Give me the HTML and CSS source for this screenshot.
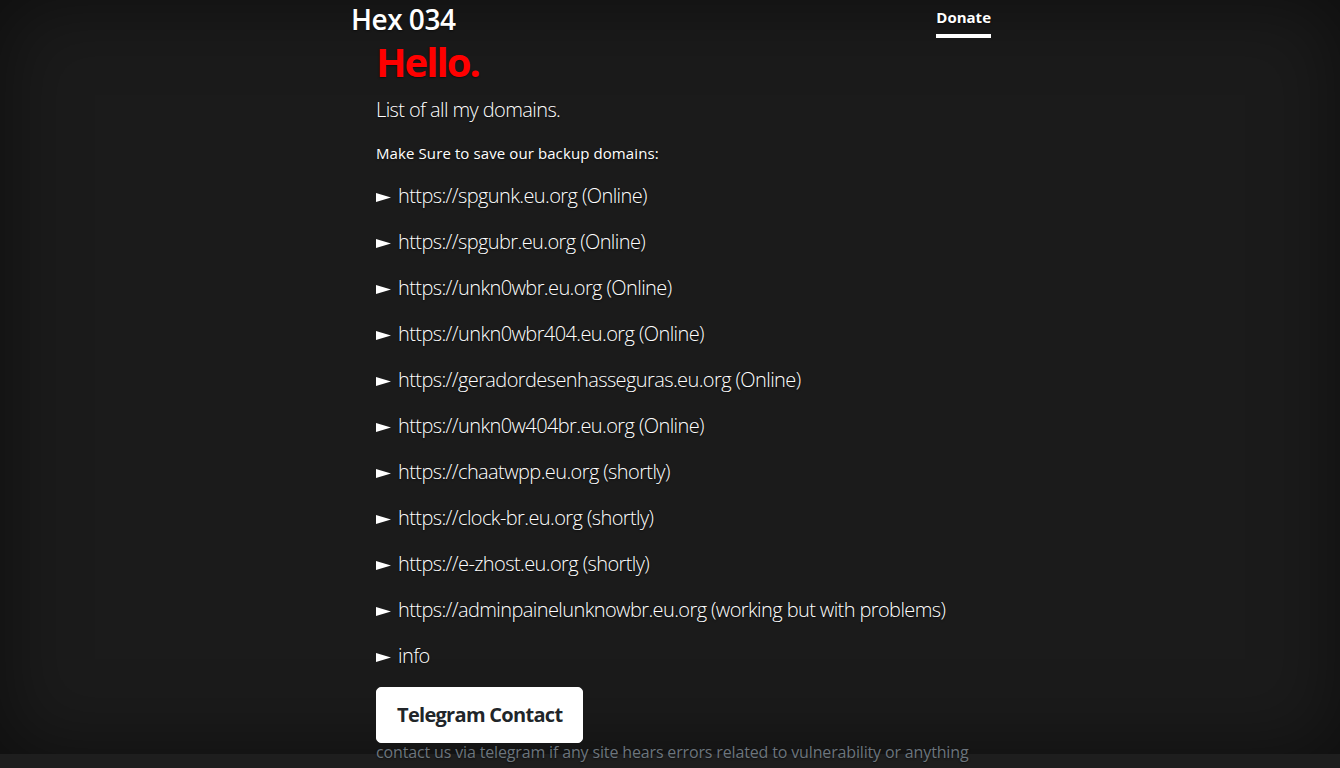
FILE: index.html
```html
<!DOCTYPE html>
<html lang="en">
<head>
<meta charset="utf-8">
<title>Hex 034</title>
<link rel="stylesheet" href="styles.css">
</head>
<body>
<div class="cover">
  <div class="container">
    <header class="masthead">
      <h3 class="brand">Hex 034</h3>
      <nav class="nav">
        <a class="nav-link active" href="#">Donate</a>
      </nav>
    </header>
    <main class="main">
      <h1 class="hello">Hello.</h1>
      <p class="lead">List of all my domains.</p>
      <p class="note">Make Sure to save our backup domains:</p>
      <p class="lead item"><svg class="arrow" width="15" height="9" viewBox="0 0 15 9"><polygon points="0,0 15,4.5 0,9"/></svg><a href="#">https://spgunk.eu.org</a> (Online)</p>
      <p class="lead item"><svg class="arrow" width="15" height="9" viewBox="0 0 15 9"><polygon points="0,0 15,4.5 0,9"/></svg><a href="#">https://spgubr.eu.org</a> (Online)</p>
      <p class="lead item"><svg class="arrow" width="15" height="9" viewBox="0 0 15 9"><polygon points="0,0 15,4.5 0,9"/></svg><a href="#">https://unkn0wbr.eu.org</a> (Online)</p>
      <p class="lead item"><svg class="arrow" width="15" height="9" viewBox="0 0 15 9"><polygon points="0,0 15,4.5 0,9"/></svg><a href="#">https://unkn0wbr404.eu.org</a> (Online)</p>
      <p class="lead item"><svg class="arrow" width="15" height="9" viewBox="0 0 15 9"><polygon points="0,0 15,4.5 0,9"/></svg><a href="#">https://geradordesenhasseguras.eu.org</a> (Online)</p>
      <p class="lead item"><svg class="arrow" width="15" height="9" viewBox="0 0 15 9"><polygon points="0,0 15,4.5 0,9"/></svg><a href="#">https://unkn0w404br.eu.org</a> (Online)</p>
      <p class="lead item"><svg class="arrow" width="15" height="9" viewBox="0 0 15 9"><polygon points="0,0 15,4.5 0,9"/></svg><a href="#">https://chaatwpp.eu.org</a> (shortly)</p>
      <p class="lead item"><svg class="arrow" width="15" height="9" viewBox="0 0 15 9"><polygon points="0,0 15,4.5 0,9"/></svg><a href="#">https://clock-br.eu.org</a> (shortly)</p>
      <p class="lead item"><svg class="arrow" width="15" height="9" viewBox="0 0 15 9"><polygon points="0,0 15,4.5 0,9"/></svg><a href="#">https://e-zhost.eu.org</a> (shortly)</p>
      <p class="lead item"><svg class="arrow" width="15" height="9" viewBox="0 0 15 9"><polygon points="0,0 15,4.5 0,9"/></svg><a href="#">https://adminpainelunknowbr.eu.org</a> (working but with problems)</p>
      <p class="lead item"><svg class="arrow" width="15" height="9" viewBox="0 0 15 9"><polygon points="0,0 15,4.5 0,9"/></svg><a href="#">info</a></p>
      <a class="btn" href="#">Telegram Contact</a>
      <p class="muted">contact us via telegram if any site hears errors related to vulnerability or anything related</p>
    </main>
  </div>
</div>
</body>
</html>
```

FILE: styles.css
```css
html, body {
  margin: 0;
  padding: 0;
  height: 100%;
}
body {
  background: #1e1e1e;
  color: #fff;
  font-family: "Open Sans", "Noto Sans", sans-serif;
  font-size: 16px;
  line-height: 1.5;
  overflow: hidden;
}
.cover {
  height: 754px;
  background: #1b1b1b;
  box-shadow: inset 0 0 5rem rgba(0, 0, 0, .5);
  text-shadow: 0 .05rem .1rem rgba(0, 0, 0, .5);
}
.container {
  width: 640px;
  margin: 0 auto;
  padding: 0 16px 0 18px;
}
.masthead {
  display: flex;
  justify-content: space-between;
  align-items: center;
  padding-top: 2px;
  height: 36px;
}
.brand {
  margin: 0;
  font-size: 28px;
  font-weight: 600;
  line-height: 1.2;
  letter-spacing: -0.5px;
}
.nav-link {
  display: block;
  color: #fff;
  font-weight: 700;
  font-size: 15px;
  text-decoration: none;
  border-bottom: 4px solid #fff;
  height: 35px;
  box-sizing: border-box;
  line-height: 24px;
  padding-top: 2px;
}
.main {
  padding: 0 21px 0 25px;
}
.hello {
  margin: 0 0 9px;
  color: #ff0000;
  font-size: 40px;
  font-weight: 700;
  line-height: 1.2;
  letter-spacing: -2px;
}
p {
  margin: 0 0 16px;
}
.lead {
  font-size: 20px;
  font-weight: 300;
  line-height: 30px;
  letter-spacing: -0.6px;
}
.note {
  font-size: 15px;
  line-height: 24px;
  letter-spacing: 0.1px;
}
.item a {
  color: #fff;
  text-decoration: none;
}
.arrow {
  fill: #fff;
  margin: 0 7px 0 0;
  vertical-align: 1px;
}
.btn {
  display: inline-block;
  background: #fff;
  color: #212529;
  border: 1px solid #fff;
  border-radius: 5px;
  padding: 12px 20px;
  font-size: 20px;
  font-weight: 700;
  line-height: 30px;
  letter-spacing: -0.7px;
  text-decoration: none;
  text-shadow: none;
}
.muted {
  color: #6c757d;
  font-size: 16px;
  line-height: 24px;
  margin-top: -3px;
  letter-spacing: -0.15px;
}
```
